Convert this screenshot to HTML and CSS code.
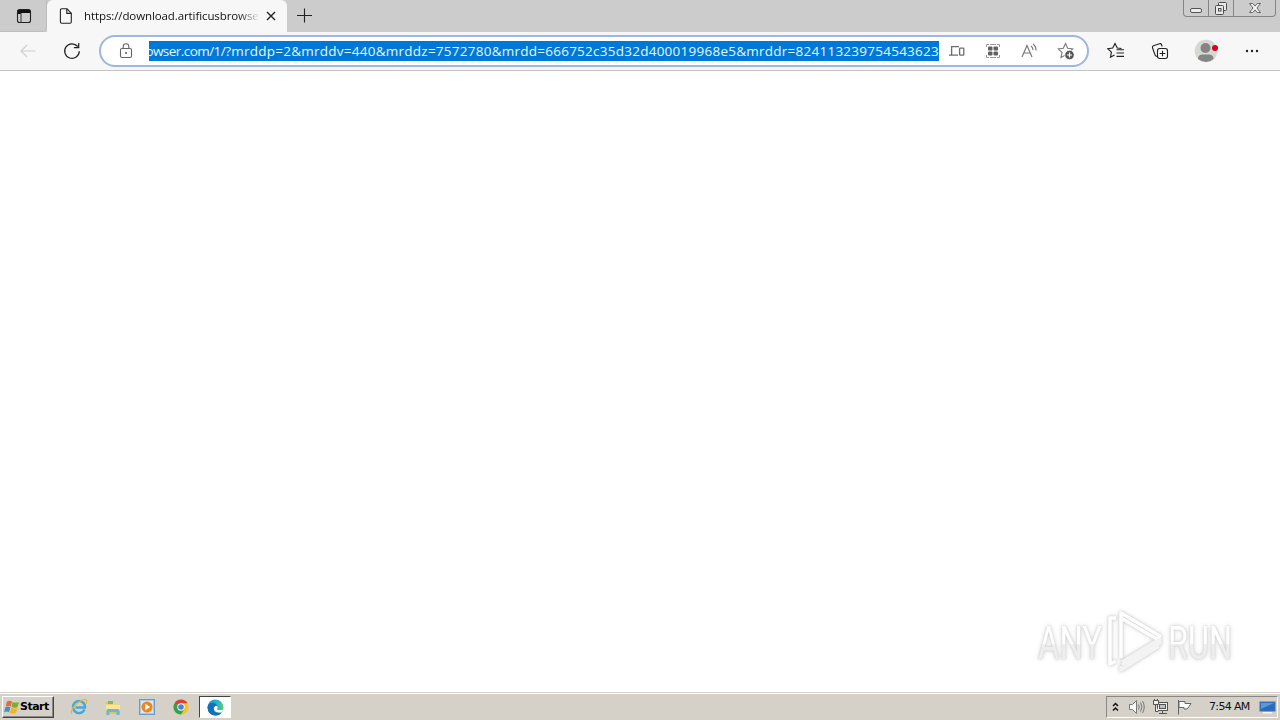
FILE: index.html
```html
<!DOCTYPE html>
<html lang="en">
<head>
<meta charset="utf-8">
<title>Browser</title>
<link rel="stylesheet" href="styles.css">
</head>
<body>
<div class="screen">
  <header class="tabstrip">
    <div class="tab-actions"><svg width="16" height="16" viewBox="0 0 16 16"><rect x="1.500" y="1.500" width="13" height="13" rx="2" fill="none" stroke="#222" stroke-width="1.100"/><path d="M2 2h12v3H2zM2 5h3v1H2z" fill="#111"/><path d="M5 5v9" stroke="#333"/></svg></div>
    <div class="tab">
      <svg class="doc" width="14" height="16" viewBox="0 0 14 16" fill="none" stroke="#222" stroke-width="1.100"><path d="M2.700.8H8l4.300 4.400v8.600q0 1.400-1.300 1.400H2.700q-1.300 0-1.300-1.400V2.100Q1.400.8 2.700.8ZM7.800 1v4.400h4.400"/></svg>
      <span class="tab-title">https://download.artificusbrowse</span>
      <svg class="close" width="10" height="10" viewBox="0 0 10 10"><path d="m1 1 8 8m0-8-8 8" stroke="#222" stroke-width="1.400"/></svg>
    </div>
    <svg class="plus" width="16" height="16" viewBox="0 0 16 16"><path d="M8.500 1.500v14M1 8.500h15" stroke="#222" stroke-width="1.100"/></svg>
    <div class="window-buttons">
      <span class="wb min"><svg width="14" height="16" viewBox="0 0 14 16"><rect x="1.500" y="8.500" width="11" height="4" rx="1.500" fill="#eee" stroke="#555"/></svg></span>
      <span class="wb max"><svg width="14" height="16" viewBox="0 0 14 16" fill="#e8e8e8" stroke="#4c4c4c"><rect x="4.500" y="2.500" width="8" height="8" rx="1"/><rect x="1.500" y="5.500" width="8" height="9" rx="1"/><rect x="4.500" y="8.500" width="2.500" height="2.500"/></svg></span>
      <span class="wb cls"><svg width="14" height="14" viewBox="0 0 14 14"><path d="M1.500 2.500h3.200L7 5l2.300-2.500h3.200L9 7l3.500 4.500H9.300L7 9l-2.300 2.500H1.500L5 7z" fill="#eee" stroke="#666"/></svg></span>
    </div>
  </header>
  <nav class="toolbar">
    <svg class="back" width="16" height="14" viewBox="0 0 16 14" fill="none" stroke="#d0d0d0" stroke-width="1.200"><path d="M15.500 7H1m6-6L1 7l6 6"/></svg>
    <svg class="reload" width="18" height="18" viewBox="0 0 18 18" fill="none" stroke="#222" stroke-width="1.250"><path d="M16.300 9.300A7.300 7.300 0 1 1 14.700 4.500M15.700 1v4.500h-4.800"/></svg>
    <div class="address">
      <svg class="lock" width="14" height="16" viewBox="0 0 14 16" fill="none" stroke="#666" stroke-width="1.100"><rect x="1.500" y="5.500" width="11" height="9" rx="1.500"/><path d="M4.200 5V3.500q0-2.800 2.800-2.800t2.800 2.800V5"/><circle cx="7" cy="10" r="1" fill="#555" stroke="none"/></svg>
      <div class="url"><span><span class="host">owser.com/1/</span>?mrddp=2&amp;mrddv=440&amp;mrddz=7572780&amp;mrdd=666752c35d32d400019968e5&amp;mrddr=824113239754543623</span></div>
      <div class="address-icons">
        <svg width="16" height="12" viewBox="0 0 16 12" fill="none" stroke="#6c6c6c" stroke-width="1.300"><path d="M10 1.600H2.600v8M0 10.200h9"/><rect x="10.600" y="3.200" width="4.200" height="7" rx=".7"/></svg>
        <svg width="16" height="16" viewBox="0 0 16 16"><path d="M1.500 4V1.500H4M12 1.500h2.500V4M14.500 12v2.500H12M4 14.500H1.500V12M5 1.500h6M5 14.500h6" fill="none" stroke="#999"/><g fill="#606060"><rect x="3" y="3.500" width="4.500" height="4" rx="1"/><rect x="8.500" y="3.500" width="4.500" height="4" rx="1"/><rect x="3" y="8.500" width="4.500" height="4" rx="1"/><rect x="8.500" y="8.500" width="4.500" height="4" rx="1"/></g></svg>
        <svg width="16" height="16" viewBox="0 0 16 16" fill="none" stroke="#777" stroke-width="1.150"><path d="M1 14 6 2.500 11 14M2.700 10h6.600M10 3q2 1.500 2 4M12 1q3.300 2.700 3 6.500"/></svg>
        <svg width="18" height="18" viewBox="0 0 18 18"><path d="m8.500 1.500 2.200 4.700 5 .6-3.800 3.600.9 5-4.300-2.300L4 15.500l1-5.100-3.700-3.600 5-.6z" fill="none" stroke="#777" stroke-width="1.100"/><circle cx="12.500" cy="13" r="4.700" fill="#555" stroke="#fff" stroke-width=".7"/><path d="M10 13h5M12.500 10.500v5" stroke="#fff" stroke-width="1.200"/></svg>
      </div>
    </div>
    <svg class="favorites" width="18" height="18" viewBox="0 0 18 18" fill="none" stroke="#222" stroke-width="1.150"><path d="M14.500 6.500 10.300 6 8 1.500 5.700 6l-4.900.7 3.600 3.500-.9 5L7.500 13M9.500 7.700H17M9.500 11H17M9.500 14.300H17"/></svg>
    <svg class="collections" width="18" height="18" viewBox="0 0 18 18" fill="none" stroke="#222" stroke-width="1.100"><path d="M3.500 11.500 1.500 5.800Q1 4.300 2.500 3.800L8.500 1.800Q10 1.300 10.600 2.800L11.200 4.500M6 14.500Q3.700 14 3.700 11.500"/><rect x="6.500" y="6.500" width="10" height="10" rx="2.200"/><path d="M8.700 11.500h5.600M11.500 8.700v5.600"/></svg>
    <svg class="avatar" width="24" height="24" viewBox="0 0 24 24"><circle cx="12" cy="12" r="11.300" fill="#d7d7d4"/><circle cx="11.500" cy="9" r="5" fill="#858585"/><path d="M4 20q0-4.500 4.500-4.500h6.500q4.500 0 4.500 4.500-3.500 3-7.500 3t-8-3Z" fill="#858585"/><circle cx="21" cy="9" r="3" fill="#d3061c"/></svg>
    <svg class="more" width="14" height="4" viewBox="0 0 14 4" fill="#222"><circle cx="2" cy="2" r="1.200"/><circle cx="7" cy="2" r="1.200"/><circle cx="12" cy="2" r="1.200"/></svg>
  </nav>
  <main class="page">
    <svg class="watermark" width="210" height="70" viewBox="0 0 210 70">
      <defs><linearGradient id="wm" x2="0" y2="1"><stop offset=".52" stop-color="#fff"/><stop offset=".54" stop-color="#eee"/></linearGradient></defs>
      <text x="9" y="55" textLength="64" lengthAdjust="spacingAndGlyphs">ANY</text>
      <text x="139" y="55" textLength="64" lengthAdjust="spacingAndGlyphs">RUN</text>
      <g class="mark"><path d="M92 54V9l39 23-3 3-36-21"/><path d="M87 14h-6v46l6-3"/><g stroke="#f3f3f3"><path d="m93 58 38-23v4L93 61M92 62v4l38-24"/></g></g>
    </svg>
  </main>
  <footer class="taskbar">
    <div class="start"><svg width="16" height="15" viewBox="0 0 16 15"><path d="M3 1.500q2.500-1.500 5 0L6.700 6.500q-2-1.500-5 0z" fill="#ea6637"/><path d="M8.500 2q3 1.500 6.500 0l-1.500 5q-3 1.500-6 0z" fill="#79ad35"/><path d="M1.400 7.200q2.500-1.500 5 0l-1.300 5q-2.500-1.500-5 0z" fill="#428ed4"/><path d="M7 7.700q3 1.500 6.500 0L12 13q-3 1.500-6.200 0z" fill="#f3b621"/></svg><span>Start</span></div>
    <div class="launch ie"><svg width="18" height="18" viewBox="0 0 18 18" fill="none"><path d="M14.500 11.500A6 6 0 1 1 15 9.500H5.500" stroke="#43a9de" stroke-width="2.400"/><path d="M2 16Q-.5 13 6 6.500 14-.5 16.500 2q.9 1-.8 4" stroke="#e9b936" stroke-width="1.300"/></svg></div>
    <div class="launch"><svg width="16" height="17" viewBox="0 0 16 17"><path d="M1 3h5l1 2h8v10H1z" fill="#dfc462"/><path d="M3 2h5v3H3z" fill="#80b777"/><path d="M1 5.500h14V12H1z" fill="#f8e69a"/><path d="M3 10h10q1.500 0 1.500 1.500V16h-3v-3h-7v3h-3v-4.500Q1.500 10 3 10" fill="#6fb4d6"/></svg></div>
    <div class="launch"><svg width="16" height="16" viewBox="0 0 16 16"><rect x=".5" y=".5" width="15" height="15" fill="#a6cbea" stroke="#6b9cc7"/><rect x="2" y="2" width="12" height="12" fill="#d9eafa"/><circle cx="8" cy="8" r="5.600" fill="#ef871c"/><path d="m6.200 4.800 5 3.200-5 3.200z" fill="#fff"/></svg></div>
    <div class="launch"><svg width="16" height="16" viewBox="0 0 16 16"><circle cx="8" cy="8" r="7.500" fill="#f6c51d"/><path d="M8 8 1.500 4.250A7.500 7.500 0 0 1 14.500 4.250H8z" fill="#dc3f34"/><path d="M8 8 1.500 4.250A7.500 7.500 0 0 0 8 15.500L11.250 9.900z" fill="#379e4b"/><circle cx="8" cy="8" r="3.700" fill="#fff"/><circle cx="8" cy="8" r="2.800" fill="#4580e6"/></svg></div>
    <div class="active-app"><svg width="17" height="17" viewBox="0 0 17 17"><defs><linearGradient id="edge"><stop stop-color="#168dd4"/><stop offset=".6" stop-color="#22b6cf"/><stop offset="1" stop-color="#62cf65"/></linearGradient></defs><circle cx="8.500" cy="8.500" r="8" fill="url(#edge)"/><path d="M.5 8q1-4.500 5.500-4 3.500.2 4.200 3-4.200.5-3.500 3.700 1 4 8 3Q12 17 8 16.500.8 16 .5 8Z" fill="#1470bd"/><path d="M8 7.200q1.500-1 2.500.8.600 1-.6 2.200.6 1.500 6.500.5l-2 2.600Q8.500 14 7 10.700q-.8-2 1-3.500Z" fill="#fff"/></svg></div>
    <div class="tray">
      <svg class="chev" width="7" height="10" viewBox="0 0 7 10" fill="none" stroke="#111" stroke-width="1.500"><path d="m1 4 2.500-2.500L6 4M1 8.500 3.500 6 6 8.500"/></svg>
      <svg class="sound" width="18" height="16" viewBox="0 0 18 16" fill="#f8f8f8" stroke="#777"><path d="M1.500 5.500h3l4-4v13l-4-4h-3z"/><path d="M10.500 5.500q1.500 2.500 0 5M12.500 3.500q3 4.500 0 9M14.500 2q3.500 6 0 12" fill="none"/></svg>
      <svg class="network" width="17" height="16" viewBox="0 0 17 16" fill="#eee" stroke="#555"><rect x="5.500" y="3.500" width="10" height="8"/><rect x="7.500" y="5.500" width="6" height="4" fill="#c0c0c0"/><path d="M7 14.500h8M10.500 12v2M1.500 1.500h5v4h-5zM3.500 5.500v7h3M2.500 0v2M5.500 0v2"/></svg>
      <svg class="flag" width="17" height="16" viewBox="0 0 17 16"><path d="M2.500 1v14.500M3 2.500h6v2h6l-2 3-2 2.500H8V8.500H3z" fill="#fafafa" stroke="#666"/></svg>
      <span class="clock">7:54 AM</span>
      <svg class="desktop" width="17" height="15" viewBox="0 0 17 15"><rect x="1" y="2" width="15" height="9" fill="#286bbf" stroke="#4474ad"/><path d="M2 3h13L2 9z" fill="#5b98d6"/><path d="M4 12h9v1.500H4z" fill="#f5f5f5"/></svg>
    </div>
  </footer>
</div>
</body>
</html>
```
FILE: styles.css
```css
* { box-sizing: border-box; }
body { margin: 0; font-family: "Noto Sans", sans-serif; overflow: hidden; }
svg { display: block; flex: none; }
.screen { width: 1280px; height: 720px; display: flex; flex-direction: column; background: #fff; }
.tabstrip { height: 32px; flex: none; display: flex; background: #ccc; }
.tab-actions { width: 47px; height: 32px; padding: 8px 0 0 16px; background: #ccc; border-right: 1px solid #bbb; border-bottom: 1px solid #bebebe; border-bottom-right-radius: 5px; }
.tab { width: 240px; height: 32px; background: #f7f7f7; border-radius: 6px 6px 0 0; display: flex; align-items: center; padding-left: 12px; }
.tab-title { width: 175px; margin-left: 11px; font-family: "Open Sans", "Noto Sans", sans-serif; font-size: 11.5px; letter-spacing: -.1px; line-height: 16px; white-space: nowrap; overflow: hidden; color: #111; mask-image: linear-gradient(90deg, #000 88%, transparent 101%); }
.close { margin-left: 7px; }
.plus { margin: 7px 0 0 9px; }
.window-buttons { width: 93px; height: 17px; margin-left: auto; margin-right: 4px; display: flex; border: 1px solid #858585; border-top: 0; border-radius: 0 0 4px 4px; background: #ccc; }
.wb { display: flex; align-items: center; justify-content: center; width: 25px; border-right: 1px solid #858585; }
.wb.cls { width: 41px; border: 0; }
.toolbar { height: 39px; flex: none; display: flex; align-items: center; background: #f7f7f7; border-bottom: 1px solid #c4c4c4; }
.back { margin-left: 20px; }
.reload { margin-left: 27px; }
.address { width: 990px; height: 32px; margin-left: 18px; display: flex; align-items: center; border: 2px solid #9db6e2; border-radius: 16px; background: #fff; }
.lock { margin-left: 18px; }
.url { width: 790px; height: 20px; margin-left: 16px; background: #0078d7; display: flex; justify-content: flex-end; overflow: hidden; }
.url span { flex: none; white-space: nowrap; color: #e2f8ff; font-family: "Open Sans", "Noto Sans", sans-serif; font-size: 13.5px; letter-spacing: .25px; line-height: 20px; }
.url .host { letter-spacing: -.55px; }
.address-icons { display: flex; width: 126px; margin-left: 10px; align-items: center; justify-content: space-between; }
.favorites { margin-left: 18px; }
.collections { margin-left: 26px; }
.avatar { margin-left: 25px; }
.more { margin-left: 27px; }
.page { flex: 1; min-height: 0; display: flex; justify-content: flex-end; align-items: flex-end; padding: 0 41px 18px 0; }
.watermark { overflow: visible; filter: drop-shadow(0 0 1px #ccc) drop-shadow(0 0 2px #ddd); }
.watermark text { font-family: Roboto, sans-serif; font-weight: 400; font-size: 47px; fill: url(#wm); }
.mark { fill: none; stroke: #fff; stroke-width: 3.500px; stroke-linejoin: round; }
.taskbar { height: 28px; flex: none; display: flex; align-items: center; padding: 1px 2px 0 2px; background: #d5d0c8; border-top: 1px solid #d5d0c8; box-shadow: inset 0 1px #fff; }
.start { width: 52px; height: 22px; display: flex; align-items: center; padding-left: 1px; border: 1px solid; border-color: #fff #444 #444 #fff; box-shadow: inset -1px -1px #888; }
.start span { font: bold 11px/16px "DejaVu Sans", sans-serif; letter-spacing: -.5px; color: #000; }
.launch { width: 34px; display: flex; justify-content: center; }
.ie { margin-left: 8px; }
.active-app { width: 32px; height: 22px; margin-left: 1px; display: flex; justify-content: center; align-items: center; background: #fff; border: 1px solid; border-color: #444 #fff #fff #444; }
.tray { width: 172px; height: 22px; margin-left: auto; display: flex; align-items: center; border: 1px solid; border-color: #8b8781 #fff #fff #8b8781; }
.chev { margin-left: 5px; }
.sound { margin-left: 9px; }
.network { margin-left: 6px; }
.flag { margin-left: 7px; }
.clock { width: 42px; margin-left: 16px; font: 11px/16px "DejaVu Sans", sans-serif; letter-spacing: -.65px; color: #111; white-space: nowrap; }
.desktop { margin-left: 8px; }
```
